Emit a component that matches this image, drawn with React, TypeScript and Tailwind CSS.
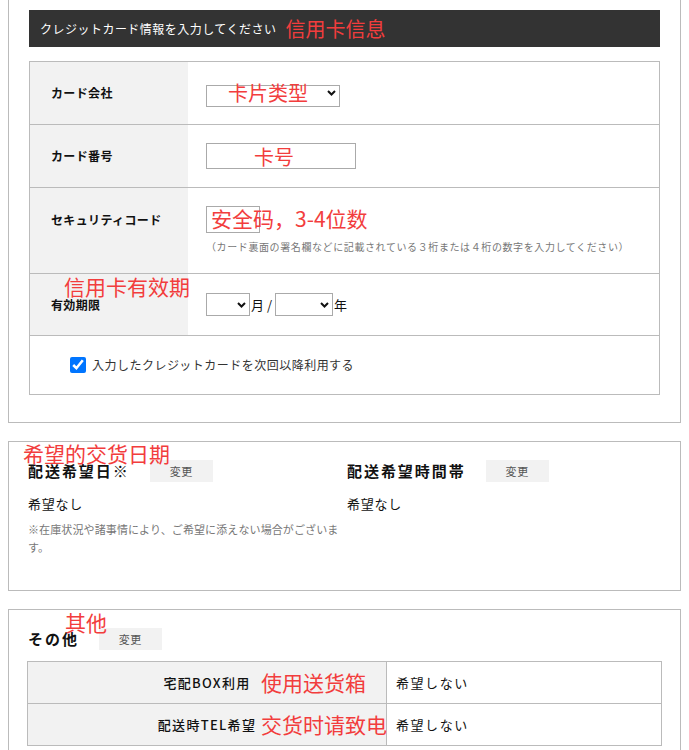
import type { ReactNode } from 'react'

const red = 'pointer-events-none absolute whitespace-nowrap font-["Noto_Sans_CJK_SC",sans-serif] text-[20px] leading-none text-[#f23d3d]'

function Chevron() {
  return (
    <svg className="pointer-events-none absolute right-[4px] top-1/2 -translate-y-1/2" width="9" height="6" viewBox="0 0 9 6">
      <polyline points="1,1 4.5,4.5 8,1" fill="none" stroke="#111" strokeWidth="2" />
    </svg>
  )
}

function Select({ className }: { className: string }) {
  return (
    <div className={`relative inline-block ${className}`}>
      <select className="h-full w-full appearance-none rounded-none border border-[#aaa] bg-white text-[12px] outline-none" />
      <Chevron />
    </div>
  )
}

function Row({ label, children, labelH, pad, extra }: { label: string; children: ReactNode; labelH: number; pad: number; extra?: ReactNode }) {
  return (
    <div className="relative flex border-b border-[#bbb]">
      <div className="w-[158px] shrink-0 bg-[#f2f2f2] pl-[21px]" style={{ paddingTop: pad, paddingBottom: pad }}>
        <div className="flex items-center text-[12px] font-bold tracking-[0.03em]" style={{ height: labelH }}>
          {label}
        </div>
      </div>
      <div className="flex-1 pl-[18px]" style={{ paddingTop: pad, paddingBottom: pad }}>
        {children}
      </div>
      {extra}
    </div>
  )
}

function ChangeButton() {
  return (
    <span className="flex h-[22px] w-[63px] items-center justify-center bg-[#f2f2f2] text-[11px] tracking-[0.05em] text-[#555]">
      変更
    </span>
  )
}

export default function App() {
  return (
    <div className="w-[689px] bg-white px-2 pb-4 font-['Noto_Sans_CJK_JP',sans-serif] text-[#111]">
      {/* card info */}
      <section className="border border-t-0 border-[#bbb] px-5 pt-[10px] pb-[27px]">
        <div className="flex h-[37px] items-center gap-[9px] bg-[#333] pl-[11px]">
          <span className="text-[12px] tracking-[0.04em] text-white">クレジットカード情報を入力してください</span>
          <span className="font-['Noto_Sans_CJK_SC',sans-serif] text-[20px] leading-none text-[#f23d3d]">信用卡信息</span>
        </div>

        <div className="mt-[14px] border border-b-0 border-[#bbb]">
          <Row label="カード会社" labelH={22} pad={20}>
            <div className="relative h-[22px] w-[134px]">
              <Select className="h-[22px] w-[134px]" />
              <span className={`${red} left-[22px] top-[1px]`}>卡片类型</span>
            </div>
          </Row>

          <Row label="カード番号" labelH={26} pad={18}>
            <div className="relative h-[26px] w-[150px]">
              <input className="h-[26px] w-[150px] border border-[#aaa] bg-white outline-none" />
              <span className={`${red} left-[48px] top-[4px]`}>卡号</span>
            </div>
          </Row>

          <Row label="セキュリティコード" labelH={27} pad={18}>
            <div className="relative h-[27px]">
              <input className="h-[27px] w-[54px] border border-[#aaa] bg-white outline-none" />
              <span className={`${red} left-[5px] top-[2px] text-[21px]`}>安全码，3-4位数</span>
            </div>
            <p className="mt-[6px] text-[10px] leading-[16px] tracking-[0.06em] text-[#777]">
              （カード裏面の署名欄などに記載されている３桁または４桁の数字を入力してください）
            </p>
          </Row>

          <Row
            label="有効期限"
            labelH={23}
            pad={19}
            extra={<span className={`${red} left-[34px] top-[2px] text-[21px]`}>信用卡有效期</span>}
          >
            <div className="flex h-[23px] items-center text-[13px]">
              <Select className="h-[23px] w-[44px]" />
              <span className="ml-[1px]">月 /</span>
              <Select className="ml-[3px] h-[23px] w-[58px]" />
              <span className="ml-[1px]">年</span>
            </div>
          </Row>

          <div className="flex h-[59px] items-center border-b border-[#bbb] pl-[40px]">
            <label className="flex items-center gap-[6px] text-[12px] tracking-[0.04em] text-[#333]">
              <input type="checkbox" defaultChecked className="h-[16px] w-[16px] accent-[#0075ff]" />
              入力したクレジットカードを次回以降利用する
            </label>
          </div>
        </div>
      </section>

      {/* delivery date */}
      <section className="relative mt-[18px] border border-[#bbb] pt-[18px] pb-[34px] pl-[19px]">
        <span className={`${red} left-[14px] top-[1px] text-[21px]`}>希望的交货日期</span>
        <div className="grid grid-cols-[319px_1fr]">
          <div>
            <div className="flex items-center gap-[20px]">
              <h3 className="text-[15px] font-bold leading-[22px] tracking-[0.13em]">配送希望日※</h3>
              <ChangeButton />
            </div>
            <p className="mt-[13px] text-[13px] leading-[18px] tracking-[0.06em]">希望なし</p>
            <p className="mt-[7px] w-[312px] text-[11px] leading-[18px] tracking-[0.01em] text-[#777]">
              ※在庫状況や諸事情により、ご希望に添えない場合がございます。
            </p>
          </div>
          <div>
            <div className="flex items-center gap-[20px]">
              <h3 className="text-[15px] font-bold leading-[22px] tracking-[0.13em]">配送希望時間帯</h3>
              <ChangeButton />
            </div>
            <p className="mt-[13px] text-[13px] leading-[18px] tracking-[0.06em]">希望なし</p>
          </div>
        </div>
      </section>

      {/* other */}
      <section className="relative mt-[18px] border border-[#bbb] pt-[18px] pb-[20px] pl-[18px] pr-[18px]">
        <span className={`${red} left-[56px] top-[2px] text-[21px]`}>其他</span>
        <div className="flex items-center gap-[20px] pl-[1px]">
          <h3 className="text-[15px] font-bold leading-[22px] tracking-[0.13em]">その他</h3>
          <ChangeButton />
        </div>
        <div className="mt-[11px] w-[635px] border border-b-0 border-[#bbb]">
          {[
            ['宅配BOX利用', '使用送货箱'],
            ['配送時TEL希望', '交货时请致电'],
          ].map(([label, note]) => (
            <div key={label} className="relative flex h-[42px] border-b border-[#bbb]">
              <div className="flex w-[359px] shrink-0 items-center justify-center border-r border-[#bbb] bg-[#f2f2f2] text-[13px] font-medium tracking-[0.1em]">
                {label}
              </div>
              <div className="flex items-center pl-[9px] text-[13px] tracking-[0.12em]">希望しない</div>
              <span className={`${red} left-[233px] top-[10px] text-[21px]`}>{note}</span>
            </div>
          ))}
        </div>
      </section>
    </div>
  )
}
